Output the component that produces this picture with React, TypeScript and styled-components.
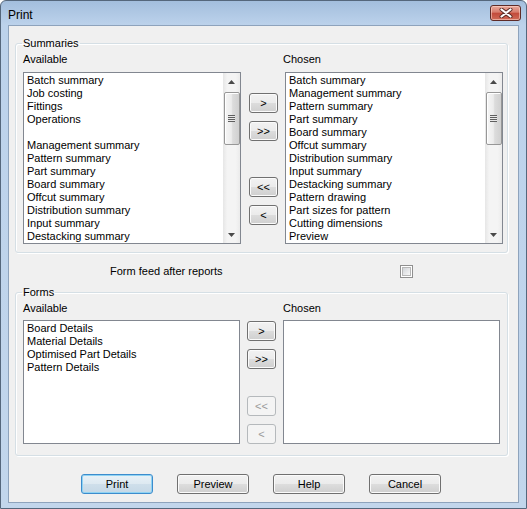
import styled, { createGlobalStyle } from "styled-components";

const GlobalStyle = createGlobalStyle`
  html, body {
    margin: 0;
    padding: 0;
    background: #ffffff;
  }
  body {
    font-family: "Liberation Sans", Arial, sans-serif;
    font-size: 11px;
    color: #000;
  }
  * {
    box-sizing: border-box;
  }
`;

const summaryAvailable = [
  "Batch summary",
  "Job costing",
  "Fittings",
  "Operations",
  "",
  "Management summary",
  "Pattern summary",
  "Part summary",
  "Board summary",
  "Offcut summary",
  "Distribution summary",
  "Input summary",
  "Destacking summary",
];

const summaryChosen = [
  "Batch summary",
  "Management summary",
  "Pattern summary",
  "Part summary",
  "Board summary",
  "Offcut summary",
  "Distribution summary",
  "Input summary",
  "Destacking summary",
  "Pattern drawing",
  "Part sizes for pattern",
  "Cutting dimensions",
  "Preview",
];

const formsAvailable = [
  "Board Details",
  "Material Details",
  "Optimised Part Details",
  "Pattern Details",
];

function Arrow({ down }: { down?: boolean }) {
  return (
    <svg width="7" height="4" viewBox="0 0 7 4">
      <polygon
        points={down ? "0,0 7,0 3.5,4" : "0,4 7,4 3.5,0"}
        fill="#4a4a4a"
      />
    </svg>
  );
}

function ScrollBar() {
  return (
    <Track>
      <ArrowCell>
        <Arrow />
      </ArrowCell>
      <Thumb>
        <Grip />
      </Thumb>
      <TrackFill />
      <ArrowCell>
        <Arrow down />
      </ArrowCell>
    </Track>
  );
}

interface IListProps {
  items: string[];
  height: number;
  scroll?: boolean;
}

function ListBox(props: IListProps) {
  return (
    <ListFrame $height={props.height}>
      <Items>
        {props.items.map((item, i) => (
          <Item key={i}>{item}</Item>
        ))}
      </Items>
      {props.scroll && <ScrollBar />}
    </ListFrame>
  );
}

function CloseGlyph() {
  return (
    <svg width="14" height="10" viewBox="0 0 14 10">
      <path
        d="M2.5 1.5 L11.5 8.5 M11.5 1.5 L2.5 8.5"
        stroke="#5a2a24"
        strokeWidth="4"
        strokeLinecap="round"
        fill="none"
      />
      <path
        d="M2.5 1.5 L11.5 8.5 M11.5 1.5 L2.5 8.5"
        stroke="#ffffff"
        strokeWidth="2.2"
        strokeLinecap="round"
        fill="none"
      />
    </svg>
  );
}

export default function App() {
  return (
    <>
      <GlobalStyle />
      <Window>
        <TitleBar>
          <TitleText>Print</TitleText>
          <CloseButton>
            <CloseGlyph />
          </CloseButton>
        </TitleBar>
        <Client>
          <Group $bottom={8}>
            <Legend>Summaries</Legend>
            <Transfer $left={218} $gap={8} $labelGap={6}>
              <ColLabel>Available</ColLabel>
              <span />
              <span />
              <span />
              <ColLabel $shift={-2}>Chosen</ColLabel>
              <ListBox items={summaryAvailable} height={172} scroll />
              <span />
              <ArrowColumn $padTop={21} $split={36}>
                <MoveButton>&gt;</MoveButton>
                <MoveButton>&gt;&gt;</MoveButton>
                <MoveButton>&lt;&lt;</MoveButton>
                <MoveButton>&lt;</MoveButton>
              </ArrowColumn>
              <span />
              <ListBox items={summaryChosen} height={172} scroll />
            </Transfer>
          </Group>

          <FeedRow>
            <span>Form feed after reports</span>
            <CheckBox>
              <CheckInner />
            </CheckBox>
          </FeedRow>

          <Group $bottom={11} $top={8}>
            <Legend>Forms</Legend>
            <Transfer $left={217} $gap={7} $labelGap={5}>
              <ColLabel>Available</ColLabel>
              <span />
              <span />
              <span />
              <ColLabel>Chosen</ColLabel>
              <ListBox items={formsAvailable} height={124} />
              <span />
              <ArrowColumn $padTop={1} $split={27}>
                <MoveButton>&gt;</MoveButton>
                <MoveButton>&gt;&gt;</MoveButton>
                <MoveButton disabled>&lt;&lt;</MoveButton>
                <MoveButton disabled>&lt;</MoveButton>
              </ArrowColumn>
              <span />
              <ListBox items={[]} height={124} />
            </Transfer>
          </Group>

          <ButtonRow>
            <DialogButton $default>Print</DialogButton>
            <DialogButton>Preview</DialogButton>
            <DialogButton>Help</DialogButton>
            <DialogButton>Cancel</DialogButton>
          </ButtonRow>
        </Client>
      </Window>
    </>
  );
}

const Window = styled.div`
  width: 527px;
  height: 509px;
  display: flex;
  flex-direction: column;
  border: 1px solid #55677c;
  border-radius: 6px 6px 0 0;
  background: linear-gradient(#a3bedd, #bcd2eb 24px, #c2d6ec);
  padding: 0 7px 5px 7px;
`;

const TitleBar = styled.div`
  height: 24px;
  display: flex;
  justify-content: space-between;
  align-items: flex-start;
`;

const TitleText = styled.span`
  font-size: 12px;
  line-height: 14px;
  margin-top: 7px;
  color: #000;
`;

const CloseButton = styled.div`
  width: 31px;
  height: 16px;
  margin-top: 4px;
  margin-right: -2px;
  border: 1px solid #5e2b27;
  border-radius: 3px;
  background: linear-gradient(#e9a99c, #d77b6b 45%, #c24a3a 50%, #cf6a57);
  box-shadow: inset 0 0 0 1px rgba(255, 220, 210, 0.55);
  display: flex;
  align-items: center;
  justify-content: center;
`;

const Client = styled.div`
  flex: 1;
  background: #f0f0f0;
  border: 1px solid #8ea3bc;
  display: flex;
  flex-direction: column;
`;

const Group = styled.fieldset<{ $bottom: number; $top?: number }>`
  margin: ${(p) => p.$top ?? 11}px 10px 0 6px;
  padding: 4px 4px ${(p) => p.$bottom}px 7px;
  border: 1px solid #d5dfe5;
  border-radius: 3px;
  box-shadow: inset 1px 1px 0 #ffffff, 1px 1px 0 #ffffff;
  min-width: 0;
`;

const Legend = styled.legend`
  margin-left: -1px;
  padding: 0 1px;
  font-size: 11px;
  line-height: 12px;
  color: #000;
`;

const Transfer = styled.div<{ $left: number; $gap: number; $labelGap: number }>`
  display: grid;
  grid-template-columns: ${(p) => p.$left}px ${(p) => p.$gap}px 29px 7px ${(p) =>
      p.$left}px;
  row-gap: ${(p) => p.$labelGap}px;
`;

const ColLabel = styled.span<{ $shift?: number }>`
  line-height: 13px;
  margin-left: ${(p) => p.$shift ?? 0}px;
`;

const ListFrame = styled.div<{ $height: number }>`
  height: ${(p) => p.$height}px;
  border: 1px solid #828790;
  background: #ffffff;
  display: flex;
  overflow: hidden;
`;

const Items = styled.div`
  flex: 1;
  padding: 1px 0 0 3px;
`;

const Item = styled.div`
  height: 13px;
  line-height: 13px;
  white-space: nowrap;
`;

const Track = styled.div`
  width: 17px;
  display: flex;
  flex-direction: column;
  align-items: center;
  background: linear-gradient(90deg, #e6e6e6, #f4f4f4 25%, #f4f4f4 75%, #ebebeb);
`;

const ArrowCell = styled.div`
  width: 17px;
  height: 17px;
  display: flex;
  align-items: center;
  justify-content: center;
`;

const TrackFill = styled.div`
  flex: 1;
`;

const Thumb = styled.div`
  margin-top: 2px;
  width: 16px;
  height: 53px;
  border: 1px solid #979797;
  border-radius: 2px;
  background: linear-gradient(90deg, #f6f6f6, #ececec 45%, #dcdcdc 55%, #d0d0d0);
  box-shadow: inset 1px 1px 0 #ffffff;
  display: flex;
  align-items: center;
  justify-content: center;
`;

const Grip = styled.div`
  width: 7px;
  height: 7px;
  background: repeating-linear-gradient(#5f5f5f 0 1px, #e9e9e9 1px 2px);
`;

const ArrowColumn = styled.div<{ $padTop: number; $split: number }>`
  display: flex;
  flex-direction: column;
  gap: 8px;
  padding-top: ${(p) => p.$padTop}px;
  & > :nth-child(3) {
    margin-top: ${(p) => p.$split - 8}px;
  }
`;

const buttonBase = `
  font-family: "Liberation Sans", Arial, sans-serif;
  font-size: 11px;
  font-weight: 400;
  height: 20px;
  padding: 0;
  border-radius: 3px;
  display: flex;
  align-items: center;
  justify-content: center;
`;

const MoveButton = styled.button`
  ${buttonBase}
  width: 29px;
  color: #000;
  border: 1px solid #707070;
  background: linear-gradient(#f2f2f2, #ebebeb 50%, #dddddd 50%, #cfcfcf);
  box-shadow: inset 0 0 0 1px #fbfbfb;

  &:disabled {
    color: #9a9a9a;
    border-color: #b5b9bc;
    background: #f4f4f4;
    box-shadow: none;
  }
`;

const FeedRow = styled.div`
  height: 13px;
  margin-top: 12px;
  display: flex;
  align-items: center;
  justify-content: space-between;
  padding: 0 105px 0 101px;
  line-height: 13px;
`;

const CheckBox = styled.div`
  width: 13px;
  height: 13px;
  border: 1px solid #8f8f8f;
  background: #ffffff;
  padding: 1px;
`;

const CheckInner = styled.div`
  width: 9px;
  height: 9px;
  border: 1px solid #b7b7b7;
  background: linear-gradient(135deg, #d2d5d9, #f7f7f7);
`;

const ButtonRow = styled.div`
  display: flex;
  gap: 24px;
  margin-top: 18px;
  padding-left: 72px;
`;

const DialogButton = styled.button<{ $default?: boolean }>`
  ${buttonBase}
  width: 72px;
  color: #000;
  border: 1px solid ${(p) => (p.$default ? "#3c8ccd" : "#707070")};
  background: ${(p) =>
    p.$default
      ? "linear-gradient(#e8f1f7, #dde9f1 50%, #cfdfeb 50%, #c5d8e6)"
      : "linear-gradient(#f2f2f2, #ebebeb 50%, #dddddd 50%, #cfcfcf)"};
  box-shadow: inset 0 0 0 1px
    ${(p) => (p.$default ? "#8fd3f3" : "#fbfbfb")};
`;
